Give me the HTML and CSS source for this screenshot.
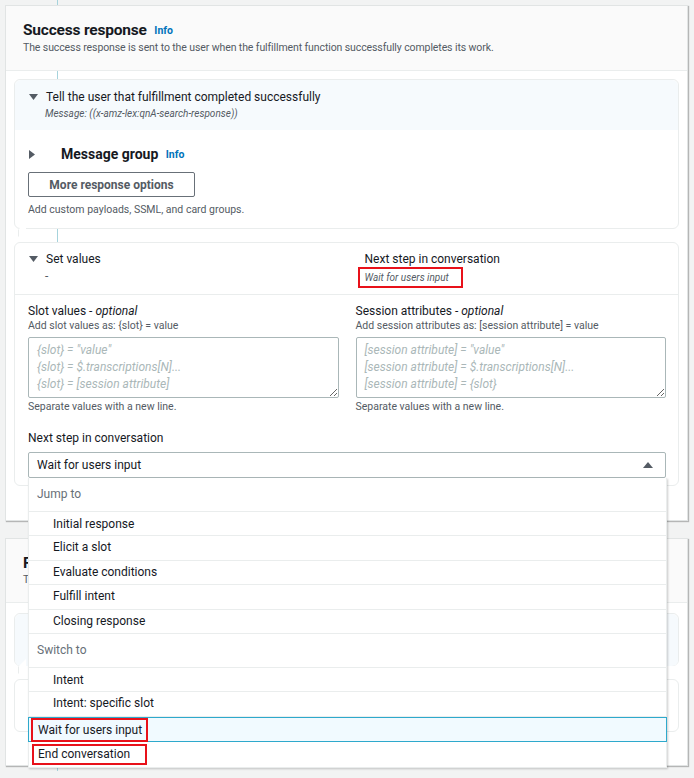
FILE: index.html
```html
<!DOCTYPE html>
<html lang="en">
<head>
    <meta charset="UTF-8">
    <meta name="viewport" content="width=device-width, initial-scale=1.0">
    <title>Fulfillment - Success response</title>
    <link rel="stylesheet" href="styles.css">
</head>
<body>
    <div class="page">
        <div class="stub"></div>

        <section class="card">
            <div class="card-header">
                <h2>Success response <a class="info" href="#">Info</a></h2>
                <p>The success response is sent to the user when the fulfillment function successfully completes its work.</p>
            </div>
            <div class="card-body">
                <div class="box bubble">
                    <div class="box-top">
                        <div class="toggle">
                            <svg class="caret" width="9" height="7" viewBox="0 0 9 7"><path d="M0 0H9L4.5 6Z"/></svg>
                            <span>Tell the user that fulfillment completed successfully</span>
                        </div>
                        <div class="sub">Message: ((x-amz-lex:qnA-search-response))</div>
                    </div>
                    <div class="box-main">
                        <div class="group-row">
                            <svg class="caret" width="7" height="9" viewBox="0 0 7 9"><path d="M0 0V9L6 4.5Z"/></svg>
                            <h3>Message group <a class="info" href="#">Info</a></h3>
                        </div>
                        <button class="btn">More response options</button>
                        <p class="hint">Add custom payloads, SSML, and card groups.</p>
                    </div>
                </div>

                <div class="box">
                    <div class="cols set-head">
                        <div>
                            <div class="toggle">
                                <svg class="caret" width="9" height="7" viewBox="0 0 9 7"><path d="M0 0H9L4.5 6Z"/></svg>
                                <span>Set values</span>
                            </div>
                            <div class="dash">-</div>
                        </div>
                        <div class="next">
                            <div class="next-title">Next step in conversation</div>
                            <span class="flag next-value">Wait for users input</span>
                        </div>
                    </div>

                    <div class="form">
                        <div class="cols">
                            <div class="field">
                                <label>Slot values - <i>optional</i></label>
                                <div class="desc">Add slot values as: {slot} = value</div>
                                <textarea placeholder='{slot} = "value"&#10;{slot} = $.transcriptions[N]...&#10;{slot} = [session attribute]'></textarea>
                                <div class="desc">Separate values with a new line.</div>
                            </div>
                            <div class="field">
                                <label>Session attributes - <i>optional</i></label>
                                <div class="desc">Add session attributes as: [session attribute] = value</div>
                                <textarea placeholder='[session attribute] = "value"&#10;[session attribute] = $.transcriptions[N]...&#10;[session attribute] = {slot}'></textarea>
                                <div class="desc">Separate values with a new line.</div>
                            </div>
                        </div>

                        <label class="step-label">Next step in conversation</label>
                        <div class="select-wrap">
                            <div class="select">
                                <span>Wait for users input</span>
                                <svg width="10" height="6" viewBox="0 0 10 6"><path d="M0 6L5 0L10 6Z"/></svg>
                            </div>
                            <ul class="menu">
                                <li class="menu-group">Jump to</li>
                                <li class="menu-item sub-item">Initial response</li>
                                <li class="menu-item sub-item">Elicit a slot</li>
                                <li class="menu-item sub-item">Evaluate conditions</li>
                                <li class="menu-item sub-item">Fulfill intent</li>
                                <li class="menu-item sub-item">Closing response</li>
                                <li class="menu-group">Switch to</li>
                                <li class="menu-item sub-item">Intent</li>
                                <li class="menu-item sub-item">Intent: specific slot</li>
                                <li class="menu-item selected"><span class="flag">Wait for users input</span></li>
                                <li class="menu-item last"><span class="flag">End conversation</span></li>
                            </ul>
                        </div>
                    </div>
                </div>
            </div>
        </section>

        <section class="card second">
            <div class="card-header">
                <h2>Failure response</h2>
                <p>The failure response is sent to the user when the fulfillment fails.</p>
            </div>
            <div class="card-body">
                <div class="box bubble short">
                    <div class="box-top"></div>
                </div>
                <div class="box short"></div>
            </div>
        </section>

        <div class="stub"></div>
    </div>
</body>
</html>
```

FILE: styles.css
```css
body {
    margin: 0;
    background-color: #f2f3f3;
    color: #16191f;
    font-family: Roboto, "Liberation Sans", sans-serif;
    font-size: 12px;
}
.page {
    width: 683px;
    padding-left: 5px;
}
.stub {
    height: 5px;
    margin-left: 52px;
    border-left: 1px solid #a6d3dc;
}
.card {
    background-color: #fff;
    border: 1px solid #e1e4e4;
    box-shadow: 1px 1px 1px rgba(0, 0, 0, 0.25);
}
.card.second {
    margin-top: 17px;
}
.card-header {
    background-color: #fafafa;
    border-bottom: 1px solid #eaeded;
    padding: 14px 17px 15px;
}
.card-header h2 {
    margin: 0;
    font-size: 15.5px;
    line-height: 20px;
    font-weight: 700;
    letter-spacing: -0.2px;
}
.card-header p {
    margin: 0;
    font-size: 10.5px;
    line-height: 14px;
    letter-spacing: -0.1px;
    color: #545b64;
}
.info {
    margin-left: 4px;
    font-size: 10.5px;
    font-weight: 700;
    letter-spacing: 0;
    color: #0073bb;
    text-decoration: none;
    vertical-align: 1px;
}
.card-body {
    position: relative;
    padding: 8px 8px 34px;
}
.card-body::before {
    content: "";
    position: absolute;
    left: 51px;
    top: 0;
    bottom: 0;
    border-left: 1px solid #a6d3dc;
}
.box {
    position: relative;
    background-color: #fff;
    border: 1px solid #eaeded;
    border-radius: 6px;
}
.box + .box {
    margin-top: 13px;
}
.bubble::after {
    content: "";
    position: absolute;
    left: 3px;
    bottom: -5px;
    width: 7px;
    height: 7px;
    background-color: #fff;
    border-left: 1px solid #eaeded;
    transform: skewY(-45deg);
}
.box-top {
    background-color: #f6fafd;
    border-radius: 6px 6px 0 0;
    padding: 9px 14px 9px;
}
.toggle {
    display: flex;
    align-items: center;
    gap: 8px;
    font-size: 12px;
    line-height: 16px;
}
.caret {
    fill: #545b64;
    flex: none;
}
.sub {
    margin: 2px 0 0 16px;
    font-size: 10px;
    line-height: 14px;
    font-style: italic;
    color: #545b64;
}
.box-main {
    padding: 14px 13px 11px;
}
.group-row {
    display: flex;
    align-items: center;
    padding-left: 1px;
    line-height: 20px;
}
.group-row h3 {
    margin: 0 0 0 25px;
    font-size: 14px;
    font-weight: 700;
}
.btn {
    display: block;
    margin-top: 7px;
    width: 167px;
    height: 25px;
    background-color: #fff;
    border: 1px solid #687078;
    border-radius: 2px;
    font-family: inherit;
    font-size: 12px;
    font-weight: 700;
    color: #545b64;
}
.hint {
    margin: 6px 0 0;
    font-size: 10.5px;
    line-height: 14px;
    color: #545b64;
}
.cols {
    display: grid;
    grid-template-columns: 1fr 1fr;
    gap: 17px;
}
.set-head {
    padding: 8px 12px 6px 13px;
    border-bottom: 1px solid #eaeded;
}
.set-head .toggle {
    padding-left: 1px;
}
.dash {
    margin: 1px 0 0 17px;
    line-height: 16px;
    color: #545b64;
}
.next-title {
    padding-left: 9px;
    line-height: 16px;
}
.flag {
    display: inline-block;
    border: 2px solid #e8111a;
}
.next-value {
    margin-left: 2px;
    padding: 0 12px 0 5px;
    font-size: 10px;
    line-height: 17px;
    font-style: italic;
    color: #545b64;
}
.form {
    padding: 8px 12px 7px 13px;
}
.field label,
.step-label {
    display: block;
    font-size: 12px;
    line-height: 16px;
}
.desc {
    font-size: 10.5px;
    line-height: 14px;
    color: #545b64;
}
textarea {
    display: block;
    box-sizing: border-box;
    width: 100%;
    height: 61px;
    margin: 4px 0 2px;
    padding: 4px 8px 2px;
    border: 1px solid #aab7b8;
    border-radius: 2px;
    resize: vertical;
    font-family: inherit;
    font-size: 12px;
    line-height: 17px;
}
textarea::placeholder {
    color: #aab7b8;
    font-style: italic;
}
.step-label {
    margin-top: 16px;
}
.select-wrap {
    position: relative;
    margin-top: 6px;
}
.select {
    display: flex;
    align-items: center;
    justify-content: space-between;
    height: 24px;
    padding: 0 12px 0 8px;
    border: 1px solid #aab7b8;
    border-radius: 2px;
    font-size: 12px;
}
.select svg {
    fill: #545b64;
}
.menu {
    position: absolute;
    z-index: 5;
    top: 100%;
    left: 0;
    right: -1px;
    margin: 0;
    padding: 0;
    list-style: none;
    background-color: #fff;
    border: 1px solid #eaeded;
    border-top: none;
    box-shadow: 1px 1px 2px rgba(0, 0, 0, 0.2);
    font-size: 12px;
}
.menu-group {
    box-sizing: border-box;
    height: 34px;
    line-height: 33px;
    padding-left: 8px;
    color: #687078;
    border-bottom: 1px solid #eaeded;
}
.menu-group + .menu-item {
    line-height: 25px;
}
.menu-item {
    box-sizing: border-box;
    height: 24.4px;
    line-height: 23px;
    padding-left: 8px;
    border-bottom: 1px solid #eaeded;
}
.sub-item {
    padding-left: 24px;
}
.menu-item.selected {
    height: 25px;
    padding-left: 2px;
    background-color: #f1faff;
    border: 1px solid #2ea9cc;
    margin: 0 -1px;
    line-height: 0;
}
.menu-item.selected .flag {
    padding: 0 4px 0 5px;
    line-height: 20px;
}
.menu-item.last {
    height: 25px;
    padding: 2px 0 0 3px;
    border-bottom: none;
    line-height: 0;
}
.menu-item.last .flag {
    padding: 0 15px 0 4px;
    line-height: 17px;
}
.box.short {
    height: 51px;
}
.second .box-top {
    border-radius: 6px;
    height: 34px;
}
.second .card-body {
    padding-top: 10px;
    padding-bottom: 33px;
}
```
